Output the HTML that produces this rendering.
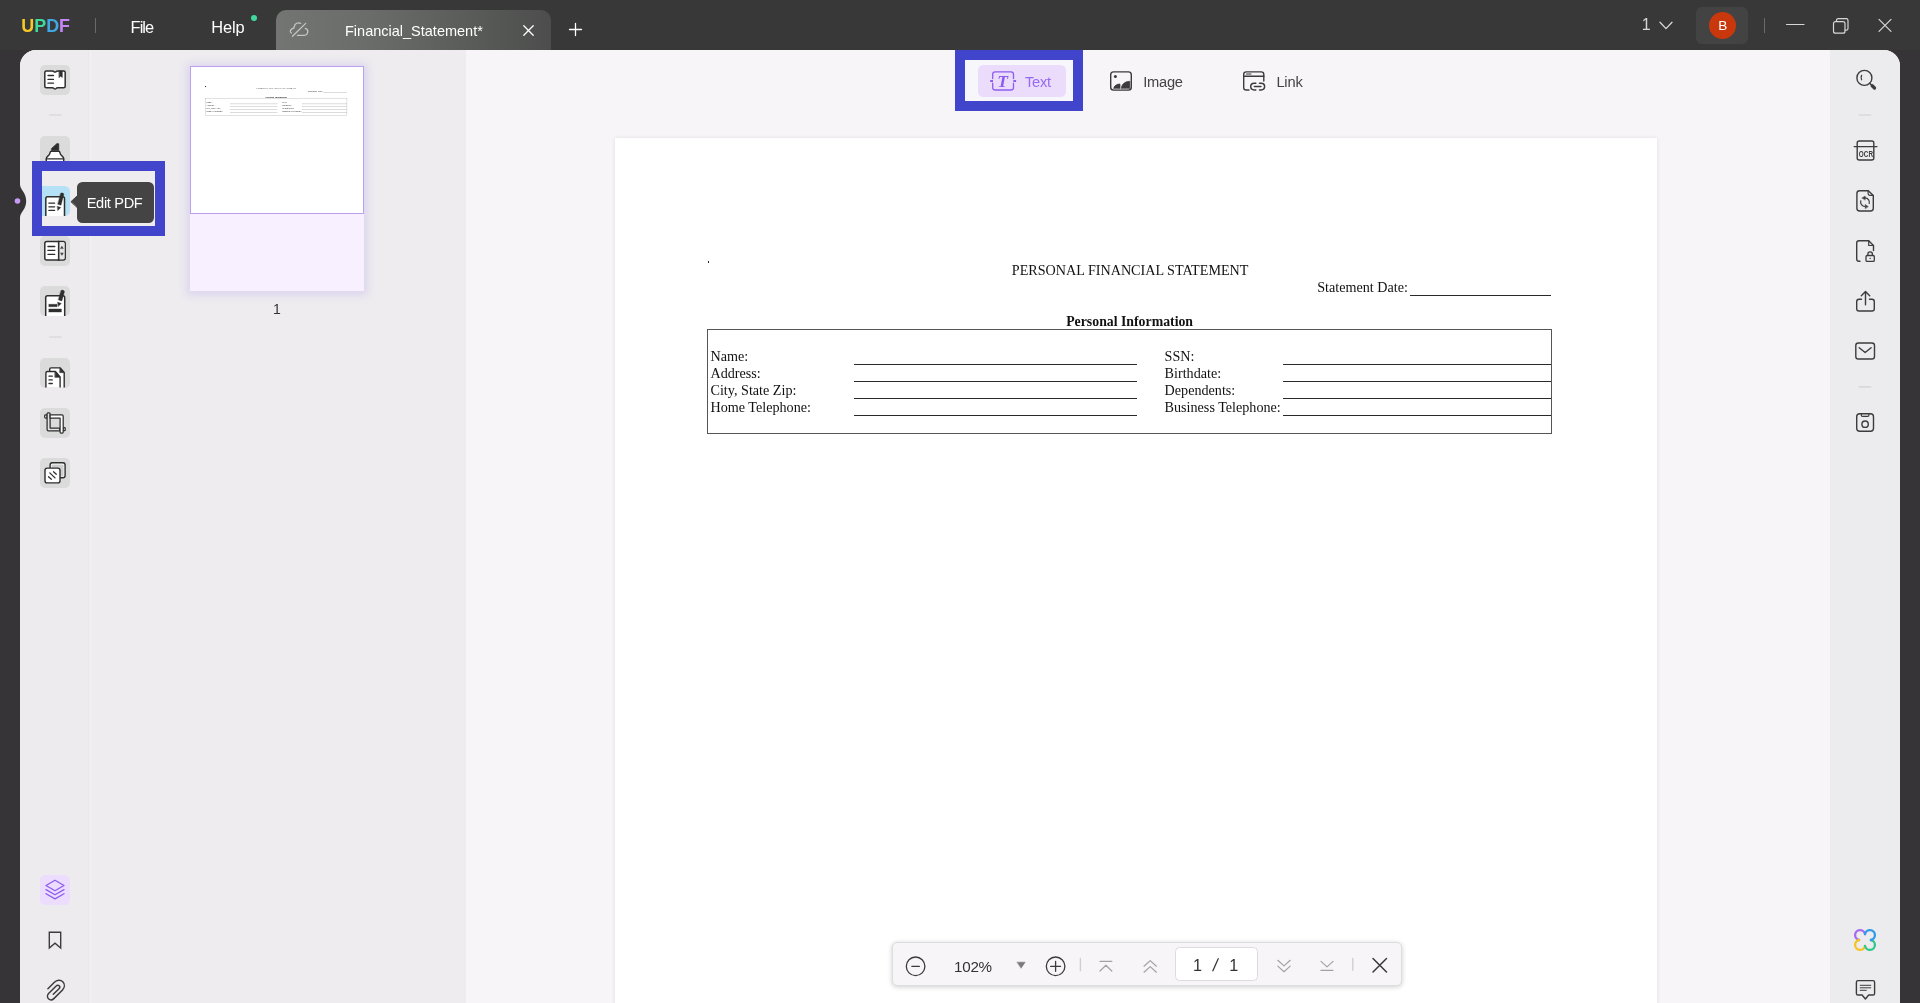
<!DOCTYPE html>
<html lang="en">
<head>
<meta charset="utf-8">
<title>UPDF - Financial_Statement</title>
<style>
*{box-sizing:border-box;margin:0;padding:0}
html,body{width:1920px;height:1003px;overflow:hidden}
body{position:relative;background:#363436;font-family:"Liberation Sans",sans-serif;color:#222}
#app{position:absolute;left:0;top:0;width:1920px;height:1003px;will-change:transform}
.abs{position:absolute}
svg{position:absolute;overflow:visible}
/* top bar */
#topbar{position:absolute;left:0;top:0;width:1920px;height:50px;background:#383838}
.menu{position:absolute;color:#fff;font-size:16.4px;line-height:20px;top:17.4px}
#tab{position:absolute;left:276px;top:10px;width:275px;height:40px;border-radius:10px 10px 0 0;background:linear-gradient(90deg,#737573 0%,#6a6c6a 35%,#5a5c5a 70%,#4c4d4c 100%)}
#tabtitle{position:absolute;left:69px;top:11px;font-size:14.5px;line-height:20px;color:#fff;white-space:nowrap}
/* main frame */
#frame{position:absolute;left:20px;top:50px;width:1880px;height:953px;border-radius:16px 16px 0 0;overflow:hidden;background:#f7f5f8}
#lside{position:absolute;left:0;top:0;width:68px;height:953px;background:#edebee}
#thumbs{position:absolute;left:68px;top:0;width:378px;height:953px;background:#eeecef}
#rside{position:absolute;left:1810px;top:0;width:70px;height:953px;background:#ecebed}
.ib{position:absolute;left:40px;width:30px;height:30px;border-radius:6px;background:#e0e0e0;overflow:hidden}
.sep{position:absolute;height:1px;background:#d4d4d4}
/* pdf page */
#page{position:absolute;left:615px;top:138px;width:1042px;height:900px;background:#fff;box-shadow:0 0 4px rgba(0,0,0,.1)}
.pt{position:absolute;font-family:"Liberation Serif",serif;color:#111;white-space:nowrap;font-size:14.15px;line-height:16px}
.ln{position:absolute;height:1px;background:#333}
.tl{font-size:14.7px;line-height:20px;color:#444;white-space:nowrap}
/* bottom toolbar */
#btool{position:absolute;left:891.6px;top:942.3px;width:510px;height:43.6px;border-radius:5px;background:#f7f5f8;border:1px solid #dddcde;box-shadow:0 1px 5px rgba(0,0,0,.2)}
</style>
</head>
<body>
<div id="app">
<div id="topbar">
  <div class="abs" id="logo" style="left:21.3px;top:16px;font-weight:bold;font-size:17.9px;line-height:20px;letter-spacing:0"><span style="color:#f6c927">U</span><span style="color:#40d99b">P</span><span style="color:#3fa9e6">D</span><span style="color:#c486f5">F</span></div>
  <div class="abs" style="left:95px;top:18px;width:1px;height:15px;background:#6a6a6a"></div>
  <div class="menu" id="mfile" style="left:130.6px;letter-spacing:-.95px">File</div>
  <div class="menu" id="mhelp" style="left:211.2px;letter-spacing:-.1px">Help</div>
  <div class="abs" style="left:250.5px;top:14.5px;width:6px;height:6px;border-radius:50%;background:#3fd9a0"></div>
  <div id="tab">
    <svg style="left:12px;top:10px" width="22" height="20" viewBox="288 20 22 20" fill="none" stroke="#c4c6c4" stroke-width="1.300" stroke-linecap="round" stroke-linejoin="round"><path d="M300.700 23.300C298 22 295 23.500 294.400 26C294.100 27 294 27.600 293.800 28.200C291.600 28.600 290.100 30.200 290.400 31.700C290.500 32.200 290.900 32.700 291.400 33M305.300 28.400C307.200 29 307.900 30.500 307.800 31.800C307.600 33.800 306.200 35.300 304.200 35.400H297.500"/><path d="M292.500 36.300L305.700 23.400"/></svg>
    <div id="tabtitle">Financial_Statement*</div>
    <svg style="left:246.5px;top:14.5px" width="11" height="11" viewBox="0 0 11 11" stroke="#fff" stroke-width="1.3" stroke-linecap="round"><path d="M.8 .8L10.2 10.2M10.2 .8L.8 10.2"/></svg>
  </div>
  <svg style="left:568.5px;top:22.5px" width="13" height="13" viewBox="0 0 13 13" stroke="#fff" stroke-width="1.3" stroke-linecap="round"><path d="M6.5 .5V12.5M.5 6.500H12.5"/></svg>
  <div class="abs" style="left:1641.7px;top:15px;font-size:16px;line-height:20px;color:#d8d8d8">1</div>
  <svg style="left:1659px;top:20.5px" width="14" height="9" viewBox="0 0 14 9" fill="none" stroke="#d8d8d8" stroke-width="1.3" stroke-linecap="round" stroke-linejoin="round"><path d="M1 1.200L7 7.600L13 1.200"/></svg>
  <div class="abs" style="left:1696px;top:7px;width:52px;height:37px;border-radius:6px;background:#424342"></div>
  <div class="abs" style="left:1709px;top:11.5px;width:27.4px;height:27.4px;border-radius:50%;background:#c9380c;color:#fff;font-size:13.6px;line-height:27.8px;text-align:center">B</div>
  <div class="abs" style="left:1764px;top:18px;width:1px;height:15px;background:#6a6a6a"></div>
  <svg style="left:1785px;top:18px" width="120" height="16" viewBox="0 0 120 16" fill="none" stroke="#d6d6d6" stroke-width="1.2" stroke-linecap="round" stroke-linejoin="round"><path d="M1.500 6.500H19"/><rect x="48.500" y="3.700" width="11.500" height="11.500" rx="2"/><path d="M51.500 3.500V2.500Q51.500 .7 53.300 .7H61.200Q63 .7 63 2.500V10.400Q63 12.200 61.200 12.200H60.200"/><path d="M94 1.300L106 13.300M106 1.300L94 13.300"/></svg>
</div>
<div id="frame">
  <div id="lside"></div>
  <div id="thumbs"></div>
  <div class="abs" style="left:67.5px;top:0;width:1.5px;height:953px;background:#e9e7ea"></div>
  <div class="abs" style="left:69px;top:0;width:2.5px;height:953px;background:#f0eef1"></div>
  <div id="rside"></div>
</div>
<svg id="lsvg" style="left:0;top:0" width="180" height="1003" viewBox="0 0 180 1003" fill="none" stroke-linecap="round" stroke-linejoin="round">
  <defs>
    <clipPath id="c4"><rect x="42" y="186" width="28" height="30"/></clipPath>
    <clipPath id="c6"><rect x="40" y="286" width="30" height="30"/></clipPath>
    <clipPath id="c8"><rect x="40" y="358" width="30" height="29.600"/></clipPath>
  </defs>
  <!-- expand handle -->
  <path d="M19.500 184.500H20C20 189.500 26.200 192.500 26.200 201C26.200 209.500 20 212.500 20 217.500H19.500Z" fill="#363436" stroke="none"/>
  <circle cx="17.500" cy="201" r="2.800" fill="#c79af5"/>
  <!-- button backgrounds -->
  <g fill="#dcdbdc" stroke="none">
    <rect x="40" y="65" width="30" height="30" rx="4.800"/>
    <rect x="40" y="136" width="30" height="30" rx="4.800"/>
    <rect x="40" y="236" width="30" height="30" rx="4.800"/>
    <rect x="40" y="286" width="30" height="30" rx="4.800"/>
    <rect x="40" y="358" width="30" height="30" rx="4.800"/>
    <rect x="40" y="408" width="30" height="30" rx="4.800"/>
    <rect x="40" y="458" width="30" height="30" rx="4.800"/>
  </g>
  <rect x="40" y="875" width="30" height="30" rx="5.500" fill="#ecdcfd" stroke="none"/>
  <!-- separators -->
  <g stroke="#d2d2d2" stroke-width="1.200"><path d="M49.500 115H61"/><path d="M49.500 337H61"/></g>
  <!-- 1 reader -->
  <g stroke="#2e2e2e" stroke-width="1.500">
    <path d="M46.300 70.900H52.300Q53.300 70.900 54 71.600Q55 72.500 56 71.600Q56.700 70.900 57.700 70.900H63.700Q65.200 70.900 65.200 72.400V86.300Q65.200 87.800 63.700 87.800H57.700Q56.700 87.800 56 88.500Q55 89.400 54 88.500Q53.300 87.800 52.300 87.800H46.300Q44.800 87.800 44.800 86.300V72.400Q44.800 70.900 46.300 70.900Z" fill="#fff"/>
    <path d="M48 75.500H53.500M48 79.400H53.500M48 83.200H53.500" stroke-width="1.300"/>
    <path d="M59.200 71H62.300V77.500L60.750 76.200L59.200 77.500Z" fill="#2e2e2e" stroke-width=".5"/>
  </g>
  <!-- 3 highlighter -->
  <g stroke="#2e2e2e" stroke-width="1.400">
    <path d="M51.400 150.800V148.600L57 143.400L58.800 143.800V150.800Z" fill="#2e2e2e" stroke-width=".6"/>
    <path d="M50.500 151.400H59.500L60.400 154C61 155.700 63.700 156.500 63.700 158.600V165H46.300V158.600C46.300 156.500 49 155.700 49.600 154Z" fill="#fff"/>
    <path d="M46.300 158.900H63.700" />
  </g>
  <!-- 5 page layout -->
  <g stroke="#2e2e2e" stroke-width="1.500">
    <rect x="44.800" y="241.500" width="20.400" height="18.600" rx="2" fill="#fff"/>
    <path d="M58.700 241.500V260.100"/>
    <path d="M58.700 242.300H63.400Q64.500 242.300 64.500 243.400V258.200Q64.500 259.300 63.400 259.300H58.700Z" fill="#e6e6e6" stroke="none"/>
    <path d="M58.700 241.500V260.100"/>
    <path d="M47.900 246.500H54.800M47.900 250.400H54.800M47.900 254.300H54.800" stroke-width="1.300"/>
    <path d="M60.700 248.300L61.900 246.300L63.100 248.300Z M60.700 253.300L61.900 255.300L63.100 253.300Z" fill="#2e2e2e" stroke-width=".5"/>
  </g>
  <!-- 6 form -->
  <g clip-path="url(#c6)" stroke="#2e2e2e" stroke-width="1.500">
    <rect x="45.700" y="295.700" width="19" height="26" rx="1.800" fill="#fff"/>
    <path d="M49 304.300H57V306.700H49Z" fill="#2e2e2e" stroke-width=".4"/>
    <path d="M49 309H61.400V312H49Z" fill="#2e2e2e" stroke-width=".4"/>
    <path d="M61.020 290.390Q63 289.300 64.580 291.410L61.880 300.910L58.320 299.890Z" fill="#2e2e2e" stroke-width=".3"/>
    <path d="M57.800 302.300L61.300 303.500L58.300 306.300Z" fill="#2e2e2e" stroke-width=".5"/>
  </g>
  <!-- 8 organize -->
  <g clip-path="url(#c8)" stroke="#2e2e2e" stroke-width="1.400">
    <path d="M49.700 371V369.300Q49.700 367.900 51.100 367.900H60.300L64.200 372.400V392H60.700" fill="#fff"/>
    <path d="M60.100 368.100L64 372.600H60.100Z" fill="#2e2e2e" stroke-width=".7"/>
    <path d="M47.300 371.500H55.400L60.100 377V392H45.900V372.900Q45.900 371.500 47.300 371.500Z" fill="#fff"/>
    <path d="M55.200 371.700L59.900 377.200H55.200Z" fill="#2e2e2e" stroke-width=".7"/>
    <path d="M49 376.200H52.300M49 379.900H52.300M49 383.500H52.300" stroke-width="1.300"/>
  </g>
  <!-- 9 crop -->
  <g stroke="#2e2e2e" stroke-width="1.250">
    <path d="M47.100 414.900H45.700Q44.700 414.900 44.700 415.700V417.300Q44.700 418.100 45.700 418.100H47.100Z" fill="#fff"/>
    <path d="M63.200 427.500H64.400Q65.200 427.500 65.200 428.300V429.900Q65.200 430.700 64.400 430.700H63.200Z" fill="#fff"/>
    <path d="M47.100 413.800Q47.100 412.900 48 412.900H49.200Q50.100 412.900 50.100 413.800V428H59.800V430.800H48.400Q47.100 430.800 47.100 429.500Z" fill="#e3e3e3"/>
    <path d="M50.100 414.900H61.900Q63.200 414.900 63.200 416.200V432.100Q63.200 433 62.300 433H61Q60.100 433 60.100 432.100V418H50.100Z" fill="#fff"/>
  </g>
  <!-- 10 watermark -->
  <g stroke="#2e2e2e" stroke-width="1.400">
    <rect x="50.100" y="462.800" width="15" height="15" rx="2.200" fill="#fff"/>
    <rect x="51.600" y="464.600" width="12" height="12" rx=".8" fill="#cfcfcf" stroke="none"/>
    <rect x="45" y="468.100" width="15" height="14.800" rx="2.200" fill="#fff"/>
    <path d="M53.500 471.800L56.300 474.200M49.800 472.900L55 477.900M48.500 476.700L51.400 479.200" stroke-width="1.300"/>
  </g>
  <!-- layers -->
  <g stroke="#8b5cf0" stroke-width="1.300">
    <path d="M55 880.300L64 885.500L55 890.700L46 885.500Z"/>
    <path d="M46 889.600L55 894.800L64 889.600"/>
    <path d="M46 893.700L55 898.900L64 893.700"/>
  </g>
  <!-- bookmark -->
  <path d="M49.300 932.200H60.700V948L55 943.200L49.300 948Z" stroke="#3c3c3c" stroke-width="1.400" stroke-linejoin="miter"/>
  <!-- paperclip -->
  <path d="M47.900 988.700L54.400 982.300C56.900 979.800 60.600 979.600 62.800 981.800C65 984 64.800 987.500 62.500 989.900L54.100 998.400C52.400 1000.100 50 1000.300 48.500 998.800C47 997.300 47.200 994.900 48.800 993.300L56.200 986C57.100 985.100 58.400 985 59.200 985.800C60 986.600 59.900 987.800 59 988.700L53.300 994.300" stroke="#3c3c3c" stroke-width="1.500"/>
</svg>
<div id="hl1" class="abs" style="left:32px;top:161px;width:133px;height:75px;border:10px solid #4045cb;background:#eeecef;overflow:hidden">
  <div class="abs" style="left:0;top:15px;width:28px;height:30px;background:#b4e1f6;border-radius:0 5.5px 5.5px 0"></div>
  <svg style="left:-42px;top:-171px" width="180" height="300" viewBox="0 0 180 300" fill="none" stroke-linecap="round" stroke-linejoin="round">
    <g clip-path="url(#c4)" stroke="#2e2e2e" stroke-width="1.500">
      <rect x="45.800" y="196.800" width="18.700" height="26" rx="1.800" fill="#fff"/>
      <path d="M48.900 203.200H54.600M48.900 206.800H54.600M48.900 210.400H54.600" stroke-width="1.300"/>
      <path d="M60.650 193.170Q62.500 192.100 63.950 194.030L61.050 205.230L57.750 204.370Z" fill="#2e2e2e" stroke-width=".3"/>
      <path d="M57.500 206.500L60.700 207.500L58 210.300Z" fill="#2e2e2e" stroke-width=".5"/>
    </g>
    <path d="M71.200 201.500L77 196V207Z" fill="#444" stroke="#444" stroke-width="1"/>
  </svg>
  <div id="tip" class="abs" style="left:34.700px;top:10.600px;width:77.400px;height:41px;border-radius:5.500px;background:#444;color:#fff;font-size:14.600px;line-height:42.4px;padding-left:10px;letter-spacing:-.33px;white-space:nowrap">Edit PDF</div>
</div>
<!--TOOLS-->
<div id="hl2" class="abs" style="left:955px;top:50px;width:128px;height:60.600px;border:10px solid #4045cb;background:#f7f6fa"></div>
<div class="abs" style="left:978px;top:65px;width:88px;height:32.400px;border-radius:5.500px;background:#ecdcfc"></div>
<svg style="left:985px;top:66px" width="36" height="30" viewBox="985 66 36 30" fill="none" stroke="#8d5df0" stroke-width="1.300" stroke-linecap="round" stroke-linejoin="round">
  <path d="M992.700 78.600V74.300Q992.700 71.800 995.200 71.800H1011Q1013.500 71.800 1013.500 74.300V78.600M1013.500 83.200V87.500Q1013.500 90 1011 90H995.200Q992.700 90 992.700 87.500V83.200"/>
  <path d="M990.200 80.900H993M1013.300 80.900H1016.100" stroke-width="2" stroke-linecap="butt"/>
  <text x="997.300" y="87.400" font-family="Liberation Serif, serif" font-style="italic" font-weight="bold" font-size="17.500" fill="#8d5df0" stroke="none">T</text>
</svg>
<div class="abs tl" id="ttext" style="left:1025px;top:71.500px;color:#9669f1;letter-spacing:-.3px">Text</div>
<svg style="left:1108px;top:68px" width="26" height="26" viewBox="1108 68 26 26" fill="none" stroke="#3b3b3b" stroke-width="1.400" stroke-linecap="round" stroke-linejoin="round">
  <rect x="1110.700" y="71.900" width="20.600" height="18.200" rx="2.800"/>
  <circle cx="1115.400" cy="76.600" r="1.500" fill="#3b3b3b" stroke="none"/>
  <path d="M1113.700 88.300C1114 85.800 1116.500 84.100 1120 84V88.300Z" fill="#3b3b3b" stroke-width=".7"/>
  <path d="M1121.300 88.300C1121.600 84.300 1124.800 81.500 1129.800 81.300V88.300Z" fill="#3b3b3b" stroke-width=".7"/>
</svg>
<div class="abs tl" id="timage" style="left:1143.300px;top:71.500px;letter-spacing:-.3px">Image</div>
<svg style="left:1240px;top:68px" width="28" height="26" viewBox="1240 68 28 26" fill="none" stroke="#3b3b3b" stroke-width="1.400" stroke-linecap="round" stroke-linejoin="round">
  <path d="M1249 90H1246.300Q1243.700 90 1243.700 87.400V74.500Q1243.700 71.900 1246.300 71.900H1261.200Q1263.800 71.900 1263.800 74.500V81"/>
  <path d="M1243.700 76.200H1263.800"/>
  <path d="M1246.500 74H1251" stroke-width="1.100"/>
  <path d="M1255.800 83.300H1254.200Q1250.700 83.300 1250.700 86.600Q1250.700 89.900 1254.200 89.900H1255.800M1259.500 83.300H1261.100Q1264.600 83.300 1264.600 86.600Q1264.600 89.900 1261.100 89.900H1259.500M1254.400 86.600H1260.900" stroke-width="1.500"/>
</svg>
<div class="abs tl" id="tlink" style="left:1276.400px;top:71.500px;letter-spacing:-.2px">Link</div>
<!--/TOOLS-->
<!--RIGHT-->
<svg id="rsvg" style="left:1840px;top:50px" width="60" height="953" viewBox="1840 50 60 953" fill="none" stroke="#3c3c3c" stroke-width="1.400" stroke-linecap="round" stroke-linejoin="round">
  <!-- search -->
  <circle cx="1864.400" cy="77.900" r="7.500"/>
  <path d="M1861.600 75.400Q1860.400 77.600 1861.600 79.700" stroke-width="1.300"/>
  <path d="M1869.700 83.300L1872.500 86"/>
  <path d="M1872.200 85.800L1874.500 88" stroke-width="3.300"/>
  <g stroke="#d2d2d2" stroke-width="1.200"><path d="M1859.200 115H1870.800"/><path d="M1859.200 386.800H1870.800"/></g>
  <!-- ocr -->
  <path d="M1857.200 146.500V143Q1857.200 141 1859.200 141H1871.800Q1873.800 141 1873.800 143V146.500"/>
  <path d="M1854.200 146.600H1876.900"/>
  <path d="M1857.200 146.600V158Q1857.200 160 1859.200 160H1871.800Q1873.800 160 1873.800 158V146.600"/>
  <text x="1858.800" y="157" font-family="Liberation Sans, sans-serif" font-weight="bold" font-size="8.400" textLength="14.200" lengthAdjust="spacingAndGlyphs" fill="#3c3c3c" stroke="none">OCR</text>
  <!-- convert -->
  <path d="M1868.300 190.700H1859.600Q1856.900 190.700 1856.900 193.400V208.300Q1856.900 211 1859.600 211H1870.600Q1873.300 211 1873.300 208.300V195.500Z"/>
  <path d="M1868.100 191V193.600Q1868.100 195.300 1869.800 195.300H1873" stroke-width="1.200"/>
  <path d="M1865 197.900A4.400 4.400 0 0 1 1869.200 203.500M1860.800 200.800A4.400 4.400 0 0 0 1865 206.500" stroke-width="1.200"/>
  <path d="M1862 197.900L1865.200 196V199.800ZM1868.100 206.500L1865.200 204.400V208.600Z" fill="#3c3c3c" stroke-width=".4"/>
  <!-- protect -->
  <path d="M1860 261.200H1859Q1856.700 261.200 1856.700 258.900V243Q1856.700 240.700 1859 240.700H1868.700L1873.500 245.500V250.500"/>
  <path d="M1868.700 240.700V245.500H1873.500" stroke-width="1.200"/>
  <rect x="1866" y="255.500" width="8.300" height="5.900" rx="1.200" stroke-width="1.300"/>
  <path d="M1867.900 255.300V254Q1867.900 251.800 1870.150 251.800Q1872.400 251.800 1872.400 254V255.300" stroke-width="1.300"/>
  <circle cx="1870.150" cy="258.400" r=".7" fill="#3c3c3c" stroke="none"/>
  <!-- share -->
  <path d="M1861.500 299.200H1859Q1856.700 299.200 1856.700 301.500V308.700Q1856.700 311 1859 311H1872Q1874.300 311 1874.300 308.700V301.500Q1874.300 299.200 1872 299.200H1869.500"/>
  <path d="M1865.500 304.700V292M1861.300 295.800L1865.500 291.600L1869.700 295.800"/>
  <!-- mail -->
  <rect x="1855.800" y="343" width="18.700" height="16" rx="2.600"/>
  <path d="M1859.200 347.700L1865.150 352.500L1871.100 347.700"/>
  <!-- save -->
  <rect x="1856.700" y="413.800" width="16.800" height="17.400" rx="3"/>
  <circle cx="1865.100" cy="424.200" r="3.200"/>
  <path d="M1861.300 413.800V415.200Q1861.300 416.400 1862.500 416.400H1867.700Q1868.900 416.400 1868.900 415.200V413.800" stroke-width="1.200"/>
  <!-- AI flower -->
  <g stroke-width="2.300" stroke-linecap="round">
    <path d="M1865.00 934.11A5.0 5.0 0 1 0 1859.11 940.00" stroke="#a56bf1"/>
    <path d="M1859.11 940.00A5.0 5.0 0 1 0 1865.00 945.89" stroke="#f6c31f"/>
    <path d="M1865.00 945.89A5.0 5.0 0 1 0 1870.89 940.00" stroke="#2dc98b"/>
    <path d="M1870.89 940.00A5.0 5.0 0 1 0 1865.00 934.11" stroke="#2f9be9"/>
  </g>
  <!-- chat -->
  <path d="M1858 980.600H1873Q1874.600 980.600 1874.600 982.200V993.400Q1874.600 995 1873 995H1868.700L1865.400 999L1862.100 995H1858Q1856.400 995 1856.400 993.400V982.200Q1856.400 980.600 1858 980.600Z"/>
  <path d="M1860.200 985.300H1870.800M1860.200 987.800H1870.800M1860.200 990.300H1866.300" stroke-width="1"/>
</svg>
<!--/RIGHT-->
<!--PAGE-->
<div id="page">
 <div class="pc">
  <div class="abs" style="left:93px;top:123px;width:1px;height:1.5px;background:#222"></div>
  <div class="pt" style="left:396.8px;top:124.12px;">PERSONAL FINANCIAL STATEMENT</div>
  <div class="pt" style="left:702.2px;top:141.12px;">Statement Date:</div>
  <div class="ln" style="left:795.0px;top:156.70px;width:141.0px;height:1.2px;background:#2a2a2a"></div>
  <div class="pt" style="left:451.2px;top:175.64px;font-weight:bold;font-size:13.8px">Personal Information</div>
  <div class="abs" style="left:91.8px;top:191.3px;width:845px;height:104.3px;border:1.6px solid #565656"></div>
  <div class="pt" style="left:95.5px;top:209.82px;">Name:</div>
  <div class="pt" style="left:549.6px;top:209.82px;">SSN:</div>
  <div class="ln" style="left:239.4px;top:225.60px;width:282.2px;height:1.2px;background:#2a2a2a"></div>
  <div class="ln" style="left:668.3px;top:225.60px;width:267.7px;height:1.2px;background:#2a2a2a"></div>
  <div class="pt" style="left:95.5px;top:226.77px;">Address:</div>
  <div class="pt" style="left:549.6px;top:226.77px;">Birthdate:</div>
  <div class="ln" style="left:239.4px;top:242.65px;width:282.2px;height:1.2px;background:#2a2a2a"></div>
  <div class="ln" style="left:668.3px;top:242.65px;width:267.7px;height:1.2px;background:#2a2a2a"></div>
  <div class="pt" style="left:95.5px;top:243.72px;">City, State Zip:</div>
  <div class="pt" style="left:549.6px;top:243.72px;">Dependents:</div>
  <div class="ln" style="left:239.4px;top:259.70px;width:282.2px;height:1.2px;background:#2a2a2a"></div>
  <div class="ln" style="left:668.3px;top:259.70px;width:267.7px;height:1.2px;background:#2a2a2a"></div>
  <div class="pt" style="left:95.5px;top:260.67px;">Home Telephone:</div>
  <div class="pt" style="left:549.6px;top:260.67px;">Business Telephone:</div>
  <div class="ln" style="left:239.4px;top:276.75px;width:282.2px;height:1.2px;background:#2a2a2a"></div>
  <div class="ln" style="left:668.3px;top:276.75px;width:267.7px;height:1.2px;background:#2a2a2a"></div>
 </div>
</div>
<!--/PAGE-->
<!--THUMB-->
<div id="thumbshadow" class="abs" style="left:189.5px;top:66px;width:174.5px;height:225px;background:#f8f0fe;box-shadow:0 1px 8px 3px rgba(175,155,240,.3)"></div>
<div id="thumb" class="abs" style="left:189.5px;top:66px;width:174.5px;height:147.5px;background:#fff;border:1.3px solid #bb9ff0;overflow:hidden">
 <div class="pc" style="position:absolute;left:-1px;top:-1.1px;width:1042px;height:900px;transform:scale(.1676);transform-origin:0 0">
  <div class="abs" style="left:93px;top:123px;width:1px;height:1.5px;background:#222"></div>
  <div class="pt" style="left:396.8px;top:124.12px;">PERSONAL FINANCIAL STATEMENT</div>
  <div class="pt" style="left:702.2px;top:141.12px;">Statement Date:</div>
  <div class="ln" style="left:795.0px;top:156.70px;width:141.0px;height:1.2px;background:#2a2a2a"></div>
  <div class="pt" style="left:451.2px;top:175.64px;font-weight:bold;font-size:13.8px">Personal Information</div>
  <div class="abs" style="left:91.8px;top:191.3px;width:845px;height:104.3px;border:1.6px solid #565656"></div>
  <div class="pt" style="left:95.5px;top:209.82px;">Name:</div>
  <div class="pt" style="left:549.6px;top:209.82px;">SSN:</div>
  <div class="ln" style="left:239.4px;top:225.60px;width:282.2px;height:1.2px;background:#2a2a2a"></div>
  <div class="ln" style="left:668.3px;top:225.60px;width:267.7px;height:1.2px;background:#2a2a2a"></div>
  <div class="pt" style="left:95.5px;top:226.77px;">Address:</div>
  <div class="pt" style="left:549.6px;top:226.77px;">Birthdate:</div>
  <div class="ln" style="left:239.4px;top:242.65px;width:282.2px;height:1.2px;background:#2a2a2a"></div>
  <div class="ln" style="left:668.3px;top:242.65px;width:267.7px;height:1.2px;background:#2a2a2a"></div>
  <div class="pt" style="left:95.5px;top:243.72px;">City, State Zip:</div>
  <div class="pt" style="left:549.6px;top:243.72px;">Dependents:</div>
  <div class="ln" style="left:239.4px;top:259.70px;width:282.2px;height:1.2px;background:#2a2a2a"></div>
  <div class="ln" style="left:668.3px;top:259.70px;width:267.7px;height:1.2px;background:#2a2a2a"></div>
  <div class="pt" style="left:95.5px;top:260.67px;">Home Telephone:</div>
  <div class="pt" style="left:549.6px;top:260.67px;">Business Telephone:</div>
  <div class="ln" style="left:239.4px;top:276.75px;width:282.2px;height:1.2px;background:#2a2a2a"></div>
  <div class="ln" style="left:668.3px;top:276.75px;width:267.7px;height:1.2px;background:#2a2a2a"></div>
 </div>
</div>
<div class="abs" style="left:204.8px;top:85.7px;width:1.3px;height:1.3px;background:#222"></div>
<div class="abs" style="left:268px;top:299px;width:18px;text-align:center;font-size:14px;line-height:20px;color:#333">1</div>
<!--/THUMB-->
<!--BTOOL-->
<div id="btool">
 <svg style="left:-.6px;top:-1.3px" width="510" height="44" viewBox="892 942 510 44" fill="none" stroke="#3a3a3a" stroke-width="1.300" stroke-linecap="round" stroke-linejoin="round">
  <circle cx="915.600" cy="966.300" r="9.300"/><path d="M911.800 966.300H919.400"/>
  <path d="M1017.300 962.200H1025.100L1021.200 968Z" fill="#7a7a7a" stroke="#7a7a7a" stroke-width=".6"/>
  <circle cx="1055.600" cy="966.300" r="9.300"/><path d="M1050.600 966.300H1060.600M1055.600 961.300V971.300"/>
  <path d="M1080.400 958.500V970.800M1352.800 958.500V970.300" stroke="#cfcfcf" stroke-width="1.400"/>
  <g stroke="#a2a2a2" stroke-width="1.200">
   <path d="M1100 961.400H1111.800M1100 971L1105.900 965.200L1111.800 971"/>
   <path d="M1144 966.200L1150.200 960.600L1156.400 966.200M1144 972.200L1150.200 966.600L1156.400 972.200"/>
   <path d="M1277.800 960.300L1284 965.900L1290.200 960.300M1277.800 966.100L1284 971.700L1290.200 966.100"/>
   <path d="M1321 961.400L1327 966.900L1333 961.400M1321 970.400H1333"/>
  </g>
  <path d="M1373 958.500L1386.500 972M1386.500 958.500L1373 972" stroke-width="1.500"/>
 </svg>
 <div class="abs" id="zoomtxt" style="left:61.500px;top:13.500px;font-size:15.200px;line-height:20px;letter-spacing:-.3px;color:#333">102%</div>
 <div class="abs" id="pginput" style="left:282px;top:4px;width:83px;height:34px;border-radius:4.500px;background:#fff;border:1px solid #dcdcdc"></div>
 <div class="abs" id="pgtxt" style="left:300.500px;top:12px;font-size:16.200px;line-height:20px;color:#333;white-space:pre">1<span style="position:absolute;left:19.600px;top:-.5px;font-size:17.500px;display:inline-block;transform:skewX(-10deg)">/</span><span style="position:absolute;left:36.200px">1</span></div>
</div>
<!--/BTOOL-->
</div>
</body>
</html>
